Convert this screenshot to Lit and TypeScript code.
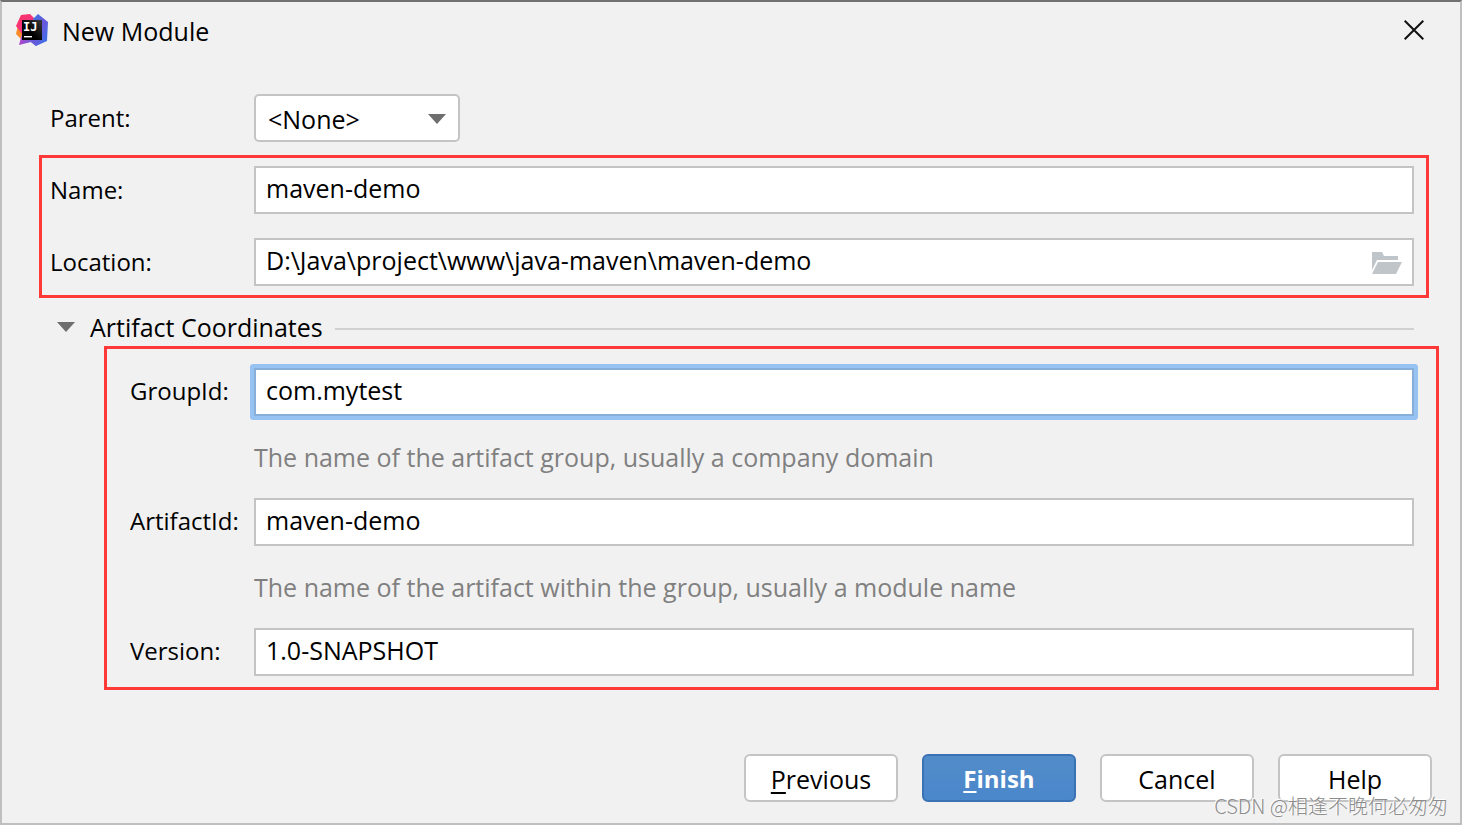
import { LitElement, html, css, nothing } from "lit";
import { customElement, state } from "lit/decorators.js";

@customElement("app-root")
export class AppRoot extends LitElement {
  @state() private expanded = true;

  static styles = css`
    :host {
      display: block;
      font-family: "Open Sans", "Noto Sans", "Noto Sans CJK SC", sans-serif;
      font-size: 25px;
      line-height: 32px;
      color: #000;
    }
    *,
    *::before {
      box-sizing: border-box;
    }
    .dialog {
      position: relative;
      display: flex;
      flex-direction: column;
      min-height: 100vh;
      border: 2px solid #bfbfbf;
      border-top-color: #737071;
      background: #f1f1f1;
    }
    input,
    select,
    button {
      font: inherit;
      color: inherit;
      margin: 0;
      outline: none;
    }
    label {
      font-size: 24px;
    }
    .titlebar {
      display: flex;
      align-items: center;
      height: 56px;
      padding: 0 36px 0 14px;
      gap: 14px;
    }
    .title {
      flex: 1;
      margin: 0;
      padding-top: 2px;
      font-size: 25px;
      font-weight: 400;
    }
    .plain {
      display: flex;
      align-items: center;
      border: 0;
      padding: 0;
      background: none;
    }
    svg {
      display: block;
    }
    .row {
      display: grid;
      grid-template-columns: 204px 1fr;
      align-items: center;
    }
    .parent {
      margin: 36px 31px 13px 48px;
    }
    .combo {
      position: relative;
      width: 206px;
    }
    .select {
      display: block;
      width: 100%;
      height: 48px;
      padding: 2px 40px 0 12px;
      border: 2px solid #c4c4c4;
      border-radius: 5px;
      background: #fff;
      appearance: none;
    }
    .combo .arrow {
      position: absolute;
      right: 14px;
      top: 20px;
      pointer-events: none;
    }
    .mark {
      border: 3px solid #ff3838;
    }
    .basics {
      display: grid;
      gap: 24px;
      margin: 0 31px 0 37px;
      padding: 8px 12px 9px 8px;
    }
    .field {
      display: flex;
      align-items: center;
      height: 48px;
      min-width: 0;
      border: 2px solid #c4c4c4;
      background: #fff;
    }
    .field:has(.groupid) {
      border-color: #87afda;
      border-radius: 1px;
      box-shadow: 0 0 0 4px #97c3f3;
    }
    .input {
      flex: 1;
      min-width: 0;
      height: 44px;
      padding: 0 10px 4px;
      border: 0;
      background: none;
    }
    .browse {
      padding-top: 2px;
      margin-right: 10px;
    }
    .section {
      display: flex;
      align-items: center;
      gap: 12px;
      height: 36px;
      margin: 12px 46px 0 55px;
    }
    .toggle {
      gap: 15px;
      padding-bottom: 2px;
    }
    .rule {
      flex: 1;
      height: 2px;
      margin-top: 2px;
      background: #d1d1d1;
    }
    .coords {
      display: grid;
      grid-template-columns: 124px 1fr;
      align-items: center;
      margin: 0 21px 0 102px;
      padding: 19px 22px 11px 23px;
    }
    .coords label {
      padding-bottom: 2px;
    }
    .hint {
      grid-column: 2;
      margin: 0;
      line-height: 82px;
      color: #808080;
    }
    .footer {
      display: flex;
      justify-content: flex-end;
      gap: 24px;
      margin-top: auto;
      padding: 40px 28px 21px;
    }
    .btn {
      width: 154px;
      height: 48px;
      padding: 2px 0 0;
      border: 2px solid #c4c4c4;
      border-radius: 6px;
      background: #fff;
    }
    .primary {
      border-color: #3a72b4;
      background: linear-gradient(#528cc9, #4a87cb);
      color: #fff;
      font-size: 24px;
      font-weight: 700;
    }
    .key {
      text-decoration: underline;
      text-decoration-thickness: 2px;
      text-underline-offset: 3px;
      text-decoration-skip-ink: none;
    }
    .watermark {
      position: absolute;
      right: 12px;
      bottom: 3px;
      font-family: "Noto Sans CJK SC", sans-serif;
      font-size: 20px;
      font-weight: 300;
      line-height: 28px;
      color: #8c8c8c;
      text-shadow: -1px -1px 0 #fff;
      pointer-events: none;
    }
  `;

  private arrow() {
    return html`<svg class="arrow" width="18" height="10" viewBox="0 0 18 10" aria-hidden="true">
      <path d="M0 0H18L9 10Z" fill="#6e6e6e" />
    </svg>`;
  }

  private logo() {
    return html`<svg width="32" height="32" viewBox="0 0 32 32" aria-hidden="true">
      <defs>
        <linearGradient id="pink" x1="0" y1="0" x2="1" y2="1">
          <stop offset="0" stop-color="#fe315d" />
          <stop offset="1" stop-color="#e8389c" />
        </linearGradient>
        <linearGradient id="blue" x1="0" y1="0" x2="1" y2="1">
          <stop offset="0" stop-color="#2f7bea" />
          <stop offset="0.5" stop-color="#6b57d9" />
          <stop offset="1" stop-color="#2f78ee" />
        </linearGradient>
        <linearGradient id="violet" x1="0" y1="0" x2="1" y2="0">
          <stop offset="0" stop-color="#b345c8" />
          <stop offset="1" stop-color="#3d6de8" />
        </linearGradient>
        <linearGradient id="black" x1="0" y1="1" x2="1" y2="0">
          <stop offset="0.4" stop-color="#000" />
          <stop offset="1" stop-color="#3a3a3a" />
        </linearGradient>
      </defs>
      <path d="M2 11L0 20L5 25L8 12Z" fill="#fb8a28" />
      <path d="M5 1L14 0L20 6L12 20H6L0 12Z" fill="url(#pink)" />
      <path d="M6 20L3 31L15 28L20 32L24 24Z" fill="url(#violet)" />
      <path d="M17 5L22 0L32 8L31 27L20 32L15 28L24 20Z" fill="url(#blue)" />
      <rect x="6" y="6" width="20" height="20" fill="url(#black)" />
      <text x="7" y="17" font-family="DejaVu Sans Mono, monospace" font-weight="700" font-size="12" fill="#fff">IJ</text>
      <rect x="8" y="22" width="8" height="1.4" fill="#fff" />
    </svg>`;
  }

  private coordinates() {
    return html`<div class="coords mark">
      <label for="group">GroupId:</label>
      <div class="field"><input class="input groupid" id="group" value="com.mytest" /></div>
      <p class="hint">The name of the artifact group, usually a company domain</p>
      <label for="artifact">ArtifactId:</label>
      <div class="field"><input class="input" id="artifact" value="maven-demo" /></div>
      <p class="hint">The name of the artifact within the group, usually a module name</p>
      <label for="version">Version:</label>
      <div class="field"><input class="input" id="version" value="1.0-SNAPSHOT" /></div>
    </div>`;
  }

  render() {
    return html`<main class="dialog">
      <header class="titlebar">
        ${this.logo()}
        <h1 class="title">New Module</h1>
        <button class="plain" aria-label="Close">
          <svg width="20" height="20" viewBox="0 0 20 20" aria-hidden="true">
            <path d="M0.7 0.7L19.3 19.3M19.3 0.7L0.7 19.3" stroke="#111" stroke-width="2" />
          </svg>
        </button>
      </header>

      <div class="row parent">
        <label for="parent">Parent:</label>
        <div class="combo">
          <select class="select" id="parent">
            <option>&lt;None&gt;</option>
          </select>
          ${this.arrow()}
        </div>
      </div>

      <div class="basics mark">
        <div class="row">
          <label for="name">Name:</label>
          <div class="field"><input class="input" id="name" value="maven-demo" /></div>
        </div>
        <div class="row">
          <label for="location">Location:</label>
          <div class="field">
            <input class="input" id="location" value="D:\\Java\\project\\www\\java-maven\\maven-demo" />
            <button class="plain browse" aria-label="Browse">
              <svg width="30" height="22" viewBox="0 0 30 22" aria-hidden="true">
                <path d="M0 0H10L12 4H26V8H5L0 18Z" fill="#c0c5c9" />
                <path d="M6 10H30L24 22H0Z" fill="#c0c5c9" />
              </svg>
            </button>
          </div>
        </div>
      </div>

      <div class="section">
        <button
          class="plain toggle"
          aria-expanded=${this.expanded ? "true" : "false"}
          @click=${() => (this.expanded = !this.expanded)}
        >
          ${this.arrow()}<span>Artifact Coordinates</span>
        </button>
        <span class="rule"></span>
      </div>
      ${this.expanded ? this.coordinates() : nothing}

      <footer class="footer">
        <button class="btn"><span class="key">P</span>revious</button>
        <button class="btn primary"><span class="key">F</span>inish</button>
        <button class="btn">Cancel</button>
        <button class="btn">Help</button>
      </footer>
      <span class="watermark">CSDN @相逢不晚何必匆匆</span>
    </main>`;
  }
}
